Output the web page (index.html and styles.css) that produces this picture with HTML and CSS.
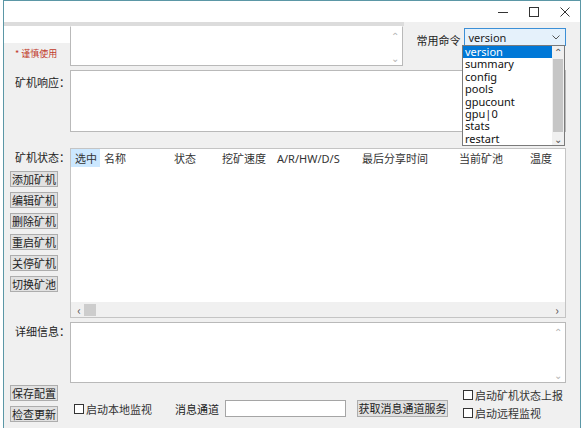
FILE: index.html
```html
<!DOCTYPE html>
<html>
<head>
<meta charset="utf-8">
<link rel="stylesheet" href="styles.css">
</head>
<body>
<div class="window">
  <div class="titlebar">
    <span class="ctl"><svg width="10" height="10" viewBox="0 0 10 10"><path d="M0 5.5H10" stroke="#333" stroke-width="1"/></svg></span>
    <span class="ctl"><svg width="10" height="10" viewBox="0 0 10 10"><rect x="0.5" y="0.5" width="9" height="9" fill="none" stroke="#333"/></svg></span>
    <span class="ctl"><svg width="10" height="10" viewBox="0 0 10 10"><path d="M0.5 0.5L9.5 9.5M9.5 0.5L0.5 9.5" stroke="#333" stroke-width="1"/></svg></span>
  </div>
  <div class="menuline"></div>
  <div class="client">
    <div class="lcell top-l"><div class="warn">* 谨慎使用</div></div>
    <div class="rcell top-r">
      <div class="tbox tb1">
        <div class="vscroll"><span class="arr">&#8963;</span><span class="arr">&#8964;</span></div>
      </div>
      <span class="cmd-label">常用命令</span>
      <div class="combo">
        <span>version</span>
        <svg width="8" height="5" viewBox="0 0 8 5"><path d="M0.5 0.5L4 4L7.5 0.5" fill="none" stroke="#555"/></svg>
      </div>
    </div>

    <div class="lcell lbl-cell"><span class="lbl">矿机响应：</span></div>
    <div class="rcell"><div class="tbox tb2"></div></div>

    <div class="lcell status-l">
      <span class="lbl status-lbl">矿机状态：</span>
      <div class="btns">
        <button class="btn">添加矿机</button>
        <button class="btn">编辑矿机</button>
        <button class="btn">删除矿机</button>
        <button class="btn">重启矿机</button>
        <button class="btn">关停矿机</button>
        <button class="btn">切换矿池</button>
      </div>
    </div>
    <div class="rcell list-r">
      <div class="listview">
        <div class="lv-head">
          <span class="col c1 sel">选中</span>
          <span class="col c2">名称</span>
          <span class="col c3">状态</span>
          <span class="col c4">挖矿速度</span>
          <span class="col c5">A/R/HW/D/S</span>
          <span class="col c6">最后分享时间</span>
          <span class="col c7">当前矿池</span>
          <span class="col c8">温度</span>
        </div>
        <div class="lv-body"></div>
        <div class="hscroll">
          <span class="harr">&lsaquo;</span>
          <span class="thumb"></span>
          <span class="spacer"></span>
          <span class="harr">&rsaquo;</span>
        </div>
      </div>
    </div>

    <div class="lcell lbl-cell detail-l"><span class="lbl">详细信息：</span></div>
    <div class="rcell">
      <div class="tbox tb3">
        <div class="vscroll v3"><span class="arr">&#8963;</span><span class="arr">&#8964;</span></div>
      </div>
    </div>

    <div class="lcell bottom-l">
      <button class="btn">保存配置</button>
      <button class="btn">检查更新</button>
    </div>
    <div class="rcell bottom-r">
      <label class="chk local"><span class="box"></span>启动本地监视</label>
      <span class="chan">消息通道</span>
      <div class="input"></div>
      <button class="btn wide">获取消息通道服务</button>
      <div class="chks">
        <label class="chk"><span class="box"></span>启动矿机状态上报</label>
        <label class="chk"><span class="box"></span>启动远程监视</label>
      </div>
    </div>
  </div>

  <ul class="dropdown">
    <li class="hl">version</li>
    <li>summary</li>
    <li>config</li>
    <li>pools</li>
    <li>gpucount</li>
    <li>gpu|0</li>
    <li>stats</li>
    <li>restart</li>
    <li class="dscroll"><span class="darr">&#8963;</span><span class="dthumb"></span><span class="darr">&#8964;</span></li>
  </ul>
</div>
</body>
</html>
```

FILE: styles.css
```css
* { box-sizing: border-box; }
html, body { margin: 0; padding: 0; background: #fff; }
body {
  width: 584px; height: 428px; overflow: hidden;
  font-family: "Noto Sans CJK SC", "Noto Sans", sans-serif;
  font-size: 11px; color: #222;
  white-space: nowrap;
}
.window {
  position: relative;
  margin-left: 3px;
  width: 578px; height: 428px;
  border: 1px solid #5b97a6;
  border-bottom: none;
  background: #f0f0f0;
}
.titlebar {
  height: 21px; background: #fff;
  display: flex; justify-content: flex-end; align-items: center;
  padding-right: 0;
}
.ctl { width: 31px; display: flex; justify-content: center; align-items: center; height: 21px; }
.menuline { height: 4px; background: #dcdcdc; margin-right: 176px; }
.client {
  display: grid;
  grid-template-columns: 66px 496px;
  grid-template-rows: 40px 62px 182px 61px 39px;
  row-gap: 4px;
}
.lcell { display: flex; flex-direction: column; }
.top-l { background: linear-gradient(#fff 0 17px, #f0f0f0 17px); }
.warn { color: #c0392b; font-size: 9px; padding: 21px 0 0 11px; }
.top-r { display: flex; align-items: flex-start; }
.tbox { background: #fff; border: 1px solid #b9b9b9; position: relative; }
.tb1 { width: 335px; height: 40px; border-top-color: #fff; }
.vscroll {
  position: absolute; right: 0; top: 0; bottom: 0; width: 14px;
  display: flex; flex-direction: column; justify-content: space-between; align-items: center;
  color: #b5b5b5; font-size: 10px; line-height: 10px; padding: 4px 0 2px;
}
.cmd-label { margin: 6px 4px 0 13px; color: #222; }
.combo {
  margin-top: 2px; width: 102px; height: 18px;
  border: 1px solid #3c8fd6; background: #e5f1fb;
  display: flex; align-items: center; justify-content: space-between;
  padding: 0 5px 0 3px;
  font-family: "Noto Sans", sans-serif; font-size: 11px;
}
.lbl-cell { padding: 4px 0 0 11px; }
.lbl { display: block; }
.tb2 { height: 62px; }
.status-l { padding-top: 12px; }
.status-l .status-lbl { padding: 1px 0 0 11px; height: 23px; }
.btns { display: flex; flex-direction: column; gap: 5px; padding-left: 6px; }
.btn {
  font-family: "Noto Sans CJK SC", sans-serif; font-size: 11px; color: #222;
  background: #e1e1e1; border: 1px solid #adadad;
  width: 48px; height: 16px; padding: 0; line-height: 14px;
  margin: 0; white-space: nowrap;
}
.list-r { padding-top: 12px; }
.listview {
  height: 170px; background: #fff; border: 1px solid #c4c4c4;
  display: flex; flex-direction: column;
}
.lv-head { height: 18px; display: flex; align-items: stretch; flex: none; }
.col { display: flex; align-items: center; padding-left: 4px; color: #333; }
.c1 { width: 29px; }
.sel { background: #cce8ff; }
.c2 { width: 70px; }
.c3 { width: 48px; }
.c4 { width: 55px; }
.c5 { width: 85px; font-family: "Noto Sans", sans-serif; }
.c6 { width: 97px; }
.c7 { width: 71px; }
.c8 { width: 30px; }
.lv-body { flex: 1; }
.hscroll {
  height: 15px; background: #f0f0f0; display: flex; align-items: center; flex: none;
  padding: 0 4px; color: #555; font-size: 12px;
}
.harr { width: 8px; text-align: center; line-height: 12px; }
.thumb { width: 12px; height: 12px; background: #cdcdcd; margin-left: 1px; }
.spacer { flex: 1; }
.tb3 { height: 61px; }
.detail-l { padding-top: 1px; }
.bottom-l { gap: 5px; padding-left: 6px; margin-top: -2px; }
.bottom-r { display: flex; align-items: center; padding-left: 4px; }
.chk { display: flex; align-items: center; gap: 2px; color: #333; white-space: nowrap; }
.box { width: 10px; height: 10px; border: 1px solid #333; background: #fff; display: inline-block; flex: none; }
.local { margin-top: 4px; }
.chan { margin: 4px 0 0 23px; }
.input { width: 121px; height: 17px; background: #fff; border: 1px solid #a5a5a5; margin: 3px 0 0 6px; flex: none; }
.btn.wide { width: 91px; height: 17px; margin: 3px 0 0 11px; flex: none; }
.chks { display: flex; flex-direction: column; gap: 2px; margin: -6px 0 0 15px; }
.dropdown {
  position: absolute; left: 458px; top: 44px;
  width: 103px; height: 101px; margin: 0; padding: 0; list-style: none;
  background: #fff; border: 1px solid #7a7a7a;
  font-family: "Noto Sans", sans-serif; font-size: 11px; line-height: 12.4px;
}
.dropdown li { padding-left: 2px; height: 12.4px; width: 89px; color: #111; }
.dropdown li.hl { background: #0078d7; color: #fff; }
.dscroll {
  position: absolute; right: 0; top: 0; bottom: 0; width: 12px !important; padding: 0 !important; height: auto !important;
  background: #f0f0f0; display: flex; flex-direction: column; align-items: center;
}
.darr { font-size: 10px; line-height: 12px; color: #555; height: 12px; }
.dthumb { width: 10px; flex: 1; background: #c6c6c6; margin: 1px 0; }
```
